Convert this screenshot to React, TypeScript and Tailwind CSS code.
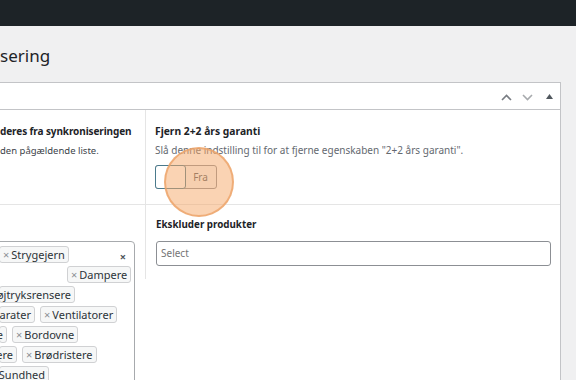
import React from 'react'

const font = "font-['Noto_Sans',sans-serif]"

function Tag({ label, className = '' }: { label: string; className?: string }) {
  return (
    <span
      className={`inline-flex h-[17px] shrink-0 items-center gap-[2px] overflow-hidden whitespace-nowrap rounded-[3px] border border-[#d0d1d3] bg-[#f6f7f7] px-[3px] text-[11px] leading-none text-[#2c3338] ${className}`}
    >
      <span className="text-[#8c8f94]">×</span>
      <span>{label}</span>
    </span>
  )
}

function Row({ children }: { children: React.ReactNode }) {
  return <div className="flex h-[20px] items-center gap-[5px]">{children}</div>
}

export default function App() {
  return (
    <div className={`h-[380px] w-[576px] overflow-hidden bg-[#f0f0f1] ${font}`}>
      {/* admin bar */}
      <div className="h-[26px] bg-[#1d2327]" />

      {/* page title */}
      <h1 className="mb-[16px] pt-[20px] text-[17px] leading-[20px] text-[#1d2327]">sering</h1>

      {/* settings panel */}
      <div className="w-[561px] border-y border-r border-[#c3c4c7] bg-white">
        <div className="flex h-[27px] items-center justify-end gap-[10px] border-b border-[#c3c4c7] pr-[7px]">
          <svg width="11" height="7" viewBox="0 0 11 7" className="mt-[3px]">
            <polyline points="1,6 5.5,1.5 10,6" fill="none" stroke="#787c82" strokeWidth="1.6" />
          </svg>
          <svg width="11" height="7" viewBox="0 0 11 7" className="mt-[3px]">
            <polyline points="1,1 5.5,5.5 10,1" fill="none" stroke="#a7aaad" strokeWidth="1.6" />
          </svg>
          <svg width="7" height="5" viewBox="0 0 7 5" className="ml-[3px]">
            <polygon points="0,5 3.5,0 7,5" fill="#50575e" />
          </svg>
        </div>

        {/* row 1 */}
        <div className="flex h-[95px] border-b border-[#e5e5e5]">
          <div className="w-[146px] overflow-hidden whitespace-nowrap border-r border-[#e5e5e5] pt-[13px]">
            <p className="text-[10px] font-bold leading-[16px] tracking-[-0.1px] text-[#1d2327]">deres fra synkroniseringen</p>
            <p className="mt-[4px] text-[9.5px] leading-[16px] text-[#3c434a]">den pågældende liste.</p>
          </div>
          <div className="relative flex-1 pl-[9px] pt-[13px]">
            <p className="text-[10.3px] font-bold leading-[16px] text-[#1d2327]">Fjern 2+2 års garanti</p>
            <p className="mt-[3px] text-[10px] leading-[16px] text-[#646970]">
              Slå denne indstilling til for at fjerne egenskaben "2+2 års garanti".
            </p>
            <div className="mt-[7px] flex h-[24px] w-[62px] rounded-[3px] border border-[#8c8f94] bg-[#f6f7f7]">
              <span className="-m-px h-[24px] w-[31px] rounded-[3px] border-[1.5px] border-[#4a7a8c] bg-white" />
              <span className="flex flex-1 items-center justify-center text-[10px] text-[#50575e]">Fra</span>
            </div>
            {/* click highlight */}
            <span className="absolute left-[18px] top-[37px] h-[70px] w-[70px] rounded-full border-2 border-[#eda46a]/80 bg-[#f5a868]/50" />
          </div>
        </div>

        {/* row 2 */}
        <div className="flex h-[200px] items-start">
          <div className="w-[145px] overflow-hidden pt-[36px]">
            <div className="-ml-[6px] flex h-[160px] w-[141px] rounded-[4px] border border-[#a7aaad] pl-[4px] pt-[2px]">
              <div className="min-w-0 flex-1">
                <Row>
                  <Tag label="Strygejern" />
                </Row>
                <Row>
                  <Tag label="Dampere" className="ml-[68px]" />
                </Row>
                <Row>
                  <Tag label="Højtryksrensere" className="w-[76px] justify-end" />
                </Row>
                <Row>
                  <Tag label="Luftapparater" className="w-[36px] justify-end" />
                  <Tag label="Ventilatorer" />
                </Row>
                <Row>
                  <Tag label="Miniovne" className="w-[6px] justify-end" />
                  <Tag label="Bordovne" />
                </Row>
                <Row>
                  <Tag label="Kaffemaskinere" className="w-[18px] justify-end" />
                  <Tag label="Brødristere" />
                </Row>
                <Row>
                  <Tag label="Sundhed" className="w-[50px] justify-end" />
                </Row>
              </div>
              <span className="mr-[8px] mt-[7px] shrink-0 text-[11px] font-bold leading-none text-[#50575e]">×</span>
            </div>
          </div>
          <div className="h-[74px] flex-1 border-l border-[#e5e5e5] pl-[10px] pr-[9px] pt-[12px]">
            <p className="text-[9.8px] font-bold leading-[16px] text-[#1d2327]">Ekskluder produkter</p>
            <div className="mt-[8px] flex h-[25px] items-center rounded-[3px] border border-[#8c8f94] px-[4px] text-[10px] text-[#757575]">
              Select
            </div>
          </div>
        </div>
      </div>
    </div>
  )
}
